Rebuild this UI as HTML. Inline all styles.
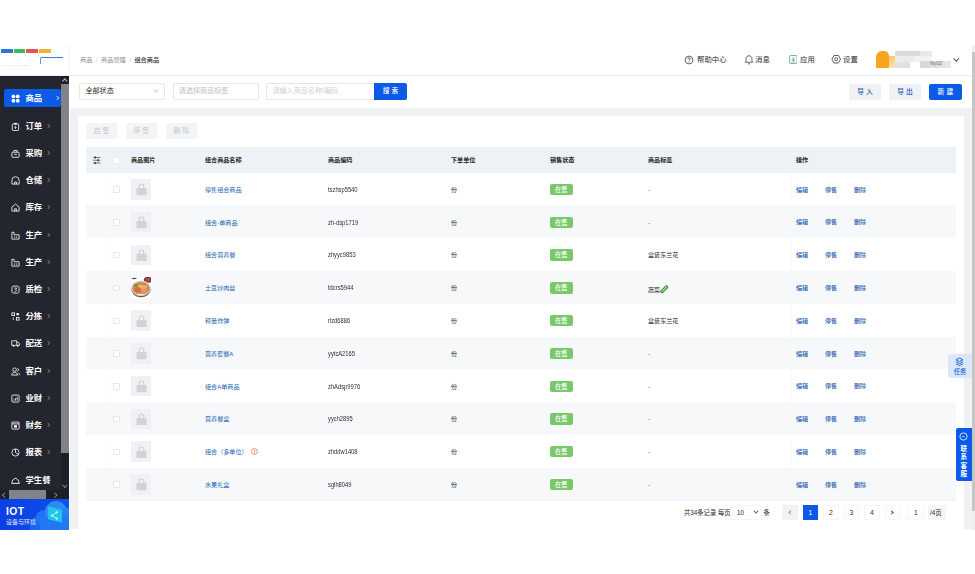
<!DOCTYPE html>
<html lang="zh-CN"><head><meta charset="utf-8"><title>组合商品</title>
<style>
*{box-sizing:border-box;margin:0;padding:0}
html,body{width:975px;height:574px;overflow:hidden;background:#fff}
body{position:relative;font-family:"Liberation Sans","Noto Sans CJK SC",sans-serif;color:#222;font-size:7px;line-height:1}
.a{position:absolute}
.t{position:absolute;white-space:nowrap;line-height:10px;height:10px}
#side{left:0;top:76px;width:69.4px;height:453.5px;background:#23262f}
.mi{position:absolute;left:0;width:61px;height:18px;color:#fff;font-size:8.4px;font-weight:700}
.mi svg{position:absolute;left:11px;top:4.5px;width:9px;height:9px}
.mi span{position:absolute;left:25.5px;top:0;line-height:18px;white-space:nowrap}
.mi i{position:absolute;left:45.5px;top:7px;width:4px;height:4px;border-right:1px solid #7d808a;border-top:1px solid #7d808a;transform:rotate(45deg) scale(.8)}
.mi.on{left:4px;width:57px;background:#0b5be8;border-radius:2px}
.mi.on svg{left:7px}.mi.on span{left:21.5px}.mi.on i{left:51px;border-color:#cfe0ff}
.sel{position:absolute;top:83.2px;height:16.4px;border:1px solid #e6e8ec;border-radius:2px;background:#fff;font-size:7.1px;line-height:14.4px;padding-left:5px;white-space:nowrap}
.btn{position:absolute;border-radius:2px;font-size:6.8px;text-align:center;white-space:nowrap;letter-spacing:2px;padding-left:2px;font-weight:500}
.row{position:absolute;left:86px;width:869.5px;height:32.78px}
.row.alt{background:#f7f8fa}
.row .t{top:12.3px;font-size:6.1px}
.cb{position:absolute;left:27px;top:13.8px;width:6.5px;height:6.5px;border:1px solid #e6e8ec;background:#fff;border-radius:1px}
.img{position:absolute;left:45px;top:6.5px;width:20px;height:20.5px;background:#f0f1f4}
.lk{color:#2265b3}
.row .cd{color:#2e3036;font-size:7px;transform:scaleX(.825);transform-origin:0 50%}
.row .ac{font-weight:500;color:#1f5fae;top:12px}
.tag{position:absolute;left:463.7px;top:11.3px;width:23px;height:11.3px;border-radius:2px;background:#79c96a;color:#fff;font-size:6.3px;font-weight:500;line-height:11.3px;text-align:center}
.pg{position:absolute;top:505px;width:15.5px;height:15px;border:1px solid #f5f6f8;font-size:6.8px;line-height:13px;text-align:center;color:#333;background:#fff}
</style></head><body>

<div class="a" style="left:0;top:44px;width:975px;height:32px;background:#fff;border-bottom:1px solid #ebedf0"></div>
<div class="a" style="left:69px;top:44px;width:1px;height:32px;background:#f3f4f6"></div>
<div class="a" style="left:1.2px;top:48.5px;width:11.8px;height:4px;background:#2878dc;border-radius:.5px"></div>
<div class="a" style="left:13.9px;top:48.5px;width:11.5px;height:4px;background:#3dbb5c;border-radius:.5px"></div>
<div class="a" style="left:26.3px;top:48.5px;width:11.7px;height:4px;background:#e4525a;border-radius:.5px"></div>
<div class="a" style="left:39px;top:48.5px;width:11.9px;height:4px;background:#f2b533;border-radius:.5px"></div>
<div class="a" style="left:40.2px;top:56.8px;width:23px;height:7px;border-top:1.5px solid #3287d6;border-left:1.2px solid #4a98e0;border-radius:1.5px 0 0 0"></div>
<div class="a" style="left:1px;top:65px;width:28px;height:1px;background:#f0f0f3"></div>
<div class="t" style="left:80px;top:54.8px;font-size:6.2px;color:#8a8d94">商品&nbsp; <span style="color:#c3c5ca">/</span>&nbsp; 商品管理&nbsp; <span style="color:#c3c5ca">/</span>&nbsp; <span style="color:#1d1f24;font-weight:500">组合商品</span></div>

<svg class="a" style="left:684px;top:54.5px" width="10" height="10" viewBox="0 0 10 10"><circle cx="5" cy="5" r="3.9" fill="none" stroke="#3c3e44" stroke-width=".8"/><path d="M3.7 4.1c0-1.7 2.6-1.7 2.6 0 0 1-1.3 1-1.3 1.8" fill="none" stroke="#3c3e44" stroke-width=".8"/><circle cx="5" cy="7.1" r=".5" fill="#3c3e44"/></svg>
<div class="t" style="left:697px;top:54.8px;font-size:7.4px;color:#2a2c31">帮助中心</div>
<svg class="a" style="left:744px;top:54px" width="10" height="11" viewBox="0 0 10 11"><path d="M1.2 8.2c1-1 .9-2.2.9-3.6 0-3.8 5.8-3.8 5.8 0 0 1.4-.1 2.6.9 3.6zM4 9.8h2" fill="none" stroke="#3c3e44" stroke-width=".8"/></svg>
<div class="t" style="left:755px;top:54.8px;font-size:7.4px;color:#2a2c31">消息</div>
<svg class="a" style="left:788.6px;top:55.2px" width="8.6" height="9" viewBox="0 0 8.6 9"><rect x=".5" y=".5" width="7.6" height="8" rx="1.2" fill="#f4fbf8" stroke="#56b795" stroke-width=".9"/><path d="M4.3 2.4v3.2M3 4.4l1.3 1.4 1.3-1.4" fill="none" stroke="#e0524f" stroke-width=".85"/><path d="M2.3 6.9h4" stroke="#56b795" stroke-width=".7"/></svg>
<div class="t" style="left:800px;top:54.8px;font-size:7.4px;color:#2a2c31">应用</div>
<svg class="a" style="left:831px;top:54.2px" width="10.5" height="10.5" viewBox="0 0 10 10"><path d="M.9 5L2.9 1.4h4.2L9.1 5 7.1 8.6H2.9z" fill="none" stroke="#3c3e44" stroke-width=".8" stroke-linejoin="round"/><circle cx="5" cy="5" r="1.5" fill="none" stroke="#3c3e44" stroke-width=".8"/></svg>
<div class="t" style="left:843px;top:54.8px;font-size:7.4px;color:#2a2c31">设置</div>
<div class="a" style="left:876.3px;top:51.3px;width:13px;height:16.3px;background:#f7a521;border-radius:6px 5px 1px 1px"></div>
<div class="a" style="left:889.3px;top:56.4px;width:6px;height:11.2px;background:linear-gradient(#f9c56b,#fde3b0)"></div>
<div class="a" style="left:895.2px;top:50.7px;width:25px;height:5.2px;background:#dadada;filter:blur(.5px)"></div>
<div class="a" style="left:920px;top:50.7px;width:11.5px;height:5.2px;background:#e9e9e9;filter:blur(.5px)"></div>
<div class="a" style="left:895.2px;top:55.8px;width:19.5px;height:6.2px;background:#ececec;filter:blur(.5px)"></div>
<div class="a" style="left:914.5px;top:55.8px;width:17px;height:6.2px;background:#f3f3f3;filter:blur(.5px)"></div>
<div class="a" style="left:895.2px;top:62px;width:15px;height:5.6px;background:#e1e1e1;filter:blur(.5px)"></div>
<div class="a" style="left:920px;top:61.4px;width:31px;height:6.2px;background:linear-gradient(90deg,#d6d6d6,#e9e9e9);filter:blur(.5px)"></div>
<div class="t" style="left:930px;top:58.3px;font-size:5.4px;color:#777">lily02</div>
<div class="a" style="left:954.3px;top:55.6px;width:4.6px;height:4.6px;border-right:1px solid #3c3e44;border-bottom:1px solid #3c3e44;transform:rotate(45deg) scale(.88)"></div>

<div class="a" id="side">
<div class="mi on" style="top:13px"><svg viewBox="0 0 10 10"><circle cx="2.7" cy="2.7" r="2.1" fill="#fff"/><circle cx="7.5" cy="2.7" r="2.1" fill="#fff"/><circle cx="2.7" cy="7.5" r="2.1" fill="#fff"/><circle cx="7.5" cy="7.5" r="2.1" fill="#fff"/></svg><span>商品</span><i></i></div>
<div class="mi" style="top:41px"><svg viewBox="0 0 10 10"><rect x="1.5" y="2" width="7" height="7.5" rx="1" fill="none" stroke="#fff" stroke-width=".9"/><path d="M3.5 1h3v1.8h-3z" fill="#fff"/><path d="M5 4.2v3M3.8 6l1.2 1.3L6.2 6" fill="none" stroke="#fff" stroke-width="0.8"/></svg><span>订单</span><i></i></div>
<div class="mi" style="top:68px"><svg viewBox="0 0 10 10"><rect x="1" y="3.6" width="8" height="5.6" rx=".8" fill="none" stroke="#fff" stroke-width=".9"/><path d="M3.2 3.4V1.6h3.6v1.8M3.5 6h3" fill="none" stroke="#fff" stroke-width="0.9"/></svg><span>采购</span><i></i></div>
<div class="mi" style="top:95px"><svg viewBox="0 0 10 10"><path d="M1 9V4.8A4 4 0 0 1 9 4.8V9z" fill="none" stroke="#fff" stroke-width="0.9"/><path d="M4 9V6.6h2V9" fill="none" stroke="#fff" stroke-width="0.9"/></svg><span>仓储</span><i></i></div>
<div class="mi" style="top:122px"><svg viewBox="0 0 10 10"><path d="M1 9V4.4L5 1.2l4 3.2V9z" fill="none" stroke="#fff" stroke-width="0.9"/><path d="M4 9V6.4h2V9" fill="none" stroke="#fff" stroke-width="0.9"/></svg><span>库存</span><i></i></div>
<div class="mi" style="top:150px"><svg viewBox="0 0 10 10"><path d="M1 9V1.4h2.4v2.8H9V9z" fill="none" stroke="#fff" stroke-width="0.9"/><path d="M4 6v1.6M6.3 6v1.6" fill="none" stroke="#fff" stroke-width="0.9"/></svg><span>生产</span><i></i></div>
<div class="mi" style="top:177px"><svg viewBox="0 0 10 10"><path d="M1 9V1.4h2.4v2.8H9V9z" fill="none" stroke="#fff" stroke-width="0.9"/><path d="M4 6v1.6M6.3 6v1.6" fill="none" stroke="#fff" stroke-width="0.9"/></svg><span>生产</span><i></i></div>
<div class="mi" style="top:204px"><svg viewBox="0 0 10 10"><rect x="1" y="1.2" width="8" height="7.8" rx="2" fill="none" stroke="#fff" stroke-width=".9"/><path d="M3.6 3.4h2.8L5 5c1.6 0 1.8 2-.2 2H3.8" fill="none" stroke="#fff" stroke-width="0.8"/></svg><span>质检</span><i></i></div>
<div class="mi" style="top:231px"><svg viewBox="0 0 10 10"><rect x="1" y="1" width="3" height="3" fill="none" stroke="#fff" stroke-width=".9"/><rect x="6" y="6" width="3" height="3" fill="none" stroke="#fff" stroke-width=".9"/><path d="M6 2.5h3M2.5 6v3" fill="none" stroke="#fff" stroke-width="0.9"/><rect x="6.2" y="1.2" width="2.4" height="2.4" fill="#fff"/></svg><span>分拣</span><i></i></div>
<div class="mi" style="top:258px"><svg viewBox="0 0 10 10"><path d="M.8 2h5.6v5H.8zM6.4 3.6h1.8L9.4 5.2V7H6.4" fill="none" stroke="#fff" stroke-width="0.9"/><circle cx="2.8" cy="7.6" r="1" fill="#fff"/><circle cx="7.4" cy="7.6" r="1" fill="#fff"/></svg><span>配送</span><i></i></div>
<div class="mi" style="top:286px"><svg viewBox="0 0 10 10"><circle cx="4" cy="3" r="2" fill="none" stroke="#fff" stroke-width=".9"/><path d="M.8 9c0-4 6.4-4 6.4 0zM7 1.4c1.8.4 1.8 3 0 3.4M8.2 6.4c.8.4 1.2 1.4 1.2 2.6" fill="none" stroke="#fff" stroke-width="0.9"/></svg><span>客户</span><i></i></div>
<div class="mi" style="top:313px"><svg viewBox="0 0 10 10"><rect x="1" y="1.2" width="8" height="7.8" rx="1" fill="none" stroke="#fff" stroke-width=".9"/><path d="M3.2 7.4V6M5 7.4V4.6M6.8 7.4V3.2" fill="none" stroke="#fff" stroke-width="0.9"/></svg><span>业财</span><i></i></div>
<div class="mi" style="top:340px"><svg viewBox="0 0 10 10"><rect x="1" y="1.2" width="8" height="7.8" rx=".6" fill="none" stroke="#fff" stroke-width=".9"/><path d="M1 3.2h8" fill="none" stroke="#fff" stroke-width="0.9"/><rect x="3.4" y="4.6" width="3.2" height="2.8" fill="#fff"/></svg><span>财务</span><i></i></div>
<div class="mi" style="top:367px"><svg viewBox="0 0 10 10"><circle cx="5" cy="5" r="4" fill="none" stroke="#fff" stroke-width=".9"/><path d="M5 1.2V5l3 2" fill="none" stroke="#fff" stroke-width="0.9"/></svg><span>报表</span><i></i></div>
<div class="mi" style="top:395px"><svg viewBox="0 0 10 10"><path d="M.8 8.2C1.2 5.5 2.6 2.6 5 2.6S8.8 5.5 9.2 8.2z" fill="none" stroke="#fff" stroke-width="1"/></svg><span>学生餐</span></div>
<div class="a" style="left:61.2px;top:0;width:8.2px;height:414px;background:#1e2028"></div>
<div class="a" style="left:61.2px;top:8px;width:8.2px;height:368.5px;background:#828389"></div>
<div class="a" style="left:63.3px;top:3.3px;width:3.6px;height:3.6px;border-left:1px solid #b5b5b8;border-top:1px solid #b5b5b8;transform:rotate(45deg)"></div>
<div class="a" style="left:63.3px;top:406.5px;width:3.6px;height:3.6px;border-right:1px solid #85868c;border-bottom:1px solid #85868c;transform:rotate(45deg)"></div>
<div class="a" style="left:0;top:414px;width:69.4px;height:8.7px;background:#1d1f27"></div>
<div class="a" style="left:9px;top:414px;width:36.5px;height:8.7px;background:#828389"></div>
<div class="a" style="left:3px;top:416.5px;width:3.5px;height:3.5px;border-left:1px solid #7a7c84;border-bottom:1px solid #7a7c84;transform:rotate(45deg)"></div>
<div class="a" style="left:53px;top:416.5px;width:3.5px;height:3.5px;border-right:1px solid #7a7c84;border-top:1px solid #7a7c84;transform:rotate(45deg)"></div>
<div class="a" style="left:0;top:422.6px;width:69.4px;height:31px;background:linear-gradient(90deg,#0b3fe2,#0b52ec);overflow:hidden">
 <div class="a" style="left:30px;top:17px;width:44px;height:20px;background:#1a66ee;border-radius:9px 9px 0 0"></div>
 <div class="a" style="left:36px;top:11px;width:16px;height:16px;background:#1f72f1;border-radius:8px"></div>
 <div class="a" style="left:45px;top:2.5px;width:22px;height:22px;background:#2f8af6;border-radius:11px"></div>
 <div class="a" style="left:58px;top:9px;width:16px;height:16px;background:#2a80f4;border-radius:8px"></div>
 <div class="a" style="left:40px;top:18px;width:34px;height:14px;background:#2277f2"></div>
 <div class="a" style="left:47.5px;top:9.5px;width:13.5px;height:13px;background:#1fc6f0;transform:skewY(14deg)"></div>
 <svg class="a" style="left:49px;top:11px" width="11" height="11" viewBox="0 0 11 11"><path d="M7.5 2.5L3 5.5l4.5 3" stroke="#bff" stroke-width=".9" fill="none"/><circle cx="7.7" cy="2.4" r="1.1" fill="#dff"/><circle cx="3" cy="5.5" r="1.1" fill="#dff"/><circle cx="7.7" cy="8.6" r="1.1" fill="#dff"/></svg>
 <div class="t" style="left:6px;top:7.3px;font-size:10.3px;font-weight:700;color:#fff;letter-spacing:.4px;height:12px;line-height:12px">IOT</div>
 <div class="t" style="left:6px;top:19.3px;font-size:6px;color:#e4ecff;height:8px;line-height:8px">设备与环境</div>
</div>
</div>
<div class="a" style="left:69.5px;top:107.7px;width:905.5px;height:421.8px;background:#f0f1f3"></div>
<div class="a" style="left:78.3px;top:115.5px;width:886.2px;height:414px;background:#fff"></div>
<div class="sel" style="left:79.4px;width:85.6px;color:#1d1f24">全部状态<span class="a" style="left:73.5px;top:3.8px;width:4.2px;height:4.2px;border-right:1px solid #c4c7cd;border-bottom:1px solid #c4c7cd;transform:rotate(45deg) scale(.85)"></span></div>
<div class="sel" style="left:172.8px;width:85.8px;color:#bcbec4">请选择商品标签</div>
<div class="sel" style="left:266.4px;width:109px;color:#cfd1d6;border-radius:2px 0 0 2px">请输入商品名称/编码</div>
<div class="btn" style="left:374.2px;top:83.2px;width:32.7px;height:16.4px;line-height:16.4px;background:#0b5be8;color:#fff;border-radius:0 2px 2px 0">搜索</div>
<div class="btn" style="left:849px;top:83.5px;width:32px;height:16px;line-height:16px;background:#eff1f5;color:#1f62b4">导入</div>
<div class="btn" style="left:889px;top:83.5px;width:32px;height:16px;line-height:16px;background:#eff1f5;color:#1f62b4">导出</div>
<div class="btn" style="left:929px;top:83.5px;width:32.8px;height:16px;line-height:16px;background:#0b5be8;color:#fff">新建</div>
<div class="btn" style="left:86px;top:123.4px;width:31.2px;height:15.8px;line-height:15.8px;font-size:7px;background:#f3f4f6;color:#c6c8cd;font-weight:400">启售</div>
<div class="btn" style="left:125.8px;top:123.4px;width:30.9px;height:15.8px;line-height:15.8px;font-size:7px;background:#f3f4f6;color:#c6c8cd;font-weight:400">停售</div>
<div class="btn" style="left:165.6px;top:123.4px;width:31.2px;height:15.8px;line-height:15.8px;font-size:7px;background:#f3f4f6;color:#c6c8cd;font-weight:400">删除</div>

<div class="a" style="left:86px;top:147.4px;width:869.5px;height:25.2px;background:#eef1f6"></div>
<svg class="a" style="left:93.4px;top:156px" width="7.4" height="8.5" viewBox="0 0 8 8.5" preserveAspectRatio="none"><path d="M0 1.5h8M0 4.25h8M0 7h8" stroke="#33363c" stroke-width=".7"/><rect x="1.8" y=".4" width="1.3" height="2.2" fill="#33363c"/><rect x="4.9" y="3.15" width="1.3" height="2.2" fill="#33363c"/><rect x="1.8" y="5.9" width="1.3" height="2.2" fill="#33363c"/></svg>
<div class="a" style="left:113px;top:157.2px;width:6.5px;height:6.5px;background:#fff;border:1px solid #eceef2;border-radius:1px"></div>

<div class="t" style="left:131px;top:154.9px;font-size:6.1px;font-weight:700;color:#1d1f24">商品图片</div>
<div class="t" style="left:205px;top:154.9px;font-size:6.1px;font-weight:700;color:#1d1f24">组合商品名称</div>
<div class="t" style="left:328px;top:154.9px;font-size:6.1px;font-weight:700;color:#1d1f24">商品编码</div>
<div class="t" style="left:451px;top:154.9px;font-size:6.1px;font-weight:700;color:#1d1f24">下单单位</div>
<div class="t" style="left:550px;top:154.9px;font-size:6.1px;font-weight:700;color:#1d1f24">销售状态</div>
<div class="t" style="left:648px;top:154.9px;font-size:6.1px;font-weight:700;color:#1d1f24">商品标签</div>
<div class="t" style="left:796px;top:154.9px;font-size:6.1px;font-weight:700;color:#1d1f24">操作</div>
<div class="row" style="top:172.6px"><div class="cb"></div><div class="img"><svg class="a" style="left:4.5px;top:4.3px" width="11" height="12.5" viewBox="0 0 11 12.5"><rect x=".5" y="5" width="10" height="7.2" rx=".5" fill="#d1d3d7"/><path d="M3.2 5.4V3.3a2.3 2.3 0 0 1 4.6 0v2.1" fill="none" stroke="#d1d3d7" stroke-width="1.2"/></svg></div>
<div class="t lk" style="left:119px">停售组合商品</div>
<div class="t cd" style="left:242px">tszhsp5540</div>
<div class="t" style="left:365px;color:#33363c">份</div>
<div class="tag">在售</div>
<div class="t" style="left:562px;color:#33363c">-</div>
<div class="t lk ac" style="left:710px">编辑</div>
<div class="t lk ac" style="left:739px">停售</div>
<div class="t lk ac" style="left:768px">删除</div>
</div>
<div class="row alt" style="top:205.38px"><div class="cb"></div><div class="img"><svg class="a" style="left:4.5px;top:4.3px" width="11" height="12.5" viewBox="0 0 11 12.5"><rect x=".5" y="5" width="10" height="7.2" rx=".5" fill="#d1d3d7"/><path d="M3.2 5.4V3.3a2.3 2.3 0 0 1 4.6 0v2.1" fill="none" stroke="#d1d3d7" stroke-width="1.2"/></svg></div>
<div class="t lk" style="left:119px">组合-单商品</div>
<div class="t cd" style="left:242px">zh-dsp1719</div>
<div class="t" style="left:365px;color:#33363c">份</div>
<div class="tag">在售</div>
<div class="t" style="left:562px;color:#33363c">-</div>
<div class="t lk ac" style="left:710px">编辑</div>
<div class="t lk ac" style="left:739px">停售</div>
<div class="t lk ac" style="left:768px">删除</div>
</div>
<div class="row" style="top:238.16px"><div class="cb"></div><div class="img"><svg class="a" style="left:4.5px;top:4.3px" width="11" height="12.5" viewBox="0 0 11 12.5"><rect x=".5" y="5" width="10" height="7.2" rx=".5" fill="#d1d3d7"/><path d="M3.2 5.4V3.3a2.3 2.3 0 0 1 4.6 0v2.1" fill="none" stroke="#d1d3d7" stroke-width="1.2"/></svg></div>
<div class="t lk" style="left:119px">组合营养餐</div>
<div class="t cd" style="left:242px">zhyyc9853</div>
<div class="t" style="left:365px;color:#33363c">份</div>
<div class="tag">在售</div>
<div class="t" style="left:562px;color:#2a2c31">盒装东兰花</div>
<div class="t lk ac" style="left:710px">编辑</div>
<div class="t lk ac" style="left:739px">停售</div>
<div class="t lk ac" style="left:768px">删除</div>
</div>
<div class="row alt" style="top:270.94px"><div class="cb"></div><div class="img" style="background:#fff"><svg class="a" style="left:0;top:0" width="20" height="20.5" viewBox="0 0 20 20"><rect width="20" height="20" fill="#fff"/><ellipse cx="16.8" cy="2.6" rx="4" ry="3" fill="#7b3345"/><ellipse cx="17" cy="2.4" rx="2.6" ry="1.8" fill="#b5503e"/><ellipse cx="3.2" cy="1.2" rx="2.6" ry=".7" fill="#5d5044"/><ellipse cx="10" cy="12" rx="9.7" ry="8" fill="#7a5a36"/><ellipse cx="10" cy="11" rx="9.7" ry="7.7" fill="#cfd9e6"/><ellipse cx="10" cy="11.2" rx="8.6" ry="6.6" fill="#d98a50"/><ellipse cx="7" cy="12.5" rx="3.6" ry="2.8" fill="#cf6f46"/><ellipse cx="12.5" cy="9.5" rx="3.4" ry="2.6" fill="#eaa968"/><ellipse cx="13" cy="13.5" rx="3" ry="2.2" fill="#e39a5c"/><ellipse cx="5" cy="8" rx="2.4" ry="1.5" fill="#7d9440"/><ellipse cx="13.5" cy="6.8" rx="1.6" ry="1" fill="#8a9a48"/><ellipse cx="9" cy="9" rx="1.6" ry="1.2" fill="#f0be7c"/><ellipse cx="9.5" cy="17.3" rx="4.5" ry=".8" fill="#f1e6d8"/></svg></div>
<div class="t lk" style="left:119px">土豆炒肉丝</div>
<div class="t cd" style="left:242px">tdcrs5944</div>
<div class="t" style="left:365px;color:#33363c">份</div>
<div class="tag">在售</div>
<div class="t" style="left:562px;color:#2a2c31">蔬菜<svg style="position:relative;top:2px;margin-left:.3px" width="8.5" height="8.5" viewBox="0 0 8.5 8.5"><path d="M2 6.5L6.5 2" stroke="#2f7f33" stroke-width="3.4" stroke-linecap="round"/><path d="M2 6.5L6.5 2" stroke="#7fc65a" stroke-width="2" stroke-linecap="round"/><path d="M2.4 5.6L5.7 2.3" stroke="#c5eba0" stroke-width=".6" stroke-linecap="round"/></svg></div>
<div class="t lk ac" style="left:710px">编辑</div>
<div class="t lk ac" style="left:739px">停售</div>
<div class="t lk ac" style="left:768px">删除</div>
</div>
<div class="row" style="top:303.72px"><div class="cb"></div><div class="img"><svg class="a" style="left:4.5px;top:4.3px" width="11" height="12.5" viewBox="0 0 11 12.5"><rect x=".5" y="5" width="10" height="7.2" rx=".5" fill="#d1d3d7"/><path d="M3.2 5.4V3.3a2.3 2.3 0 0 1 4.6 0v2.1" fill="none" stroke="#d1d3d7" stroke-width="1.2"/></svg></div>
<div class="t lk" style="left:119px">称量炸弹</div>
<div class="t cd" style="left:242px">rlzd6886</div>
<div class="t" style="left:365px;color:#33363c">份</div>
<div class="tag">在售</div>
<div class="t" style="left:562px;color:#2a2c31">盒装东兰花</div>
<div class="t lk ac" style="left:710px">编辑</div>
<div class="t lk ac" style="left:739px">停售</div>
<div class="t lk ac" style="left:768px">删除</div>
</div>
<div class="row alt" style="top:336.5px"><div class="cb"></div><div class="img"><svg class="a" style="left:4.5px;top:4.3px" width="11" height="12.5" viewBox="0 0 11 12.5"><rect x=".5" y="5" width="10" height="7.2" rx=".5" fill="#d1d3d7"/><path d="M3.2 5.4V3.3a2.3 2.3 0 0 1 4.6 0v2.1" fill="none" stroke="#d1d3d7" stroke-width="1.2"/></svg></div>
<div class="t lk" style="left:119px">营养套餐A</div>
<div class="t cd" style="left:242px">yytcA2165</div>
<div class="t" style="left:365px;color:#33363c">份</div>
<div class="tag">在售</div>
<div class="t" style="left:562px;color:#33363c">-</div>
<div class="t lk ac" style="left:710px">编辑</div>
<div class="t lk ac" style="left:739px">停售</div>
<div class="t lk ac" style="left:768px">删除</div>
</div>
<div class="row" style="top:369.28px"><div class="cb"></div><div class="img"><svg class="a" style="left:4.5px;top:4.3px" width="11" height="12.5" viewBox="0 0 11 12.5"><rect x=".5" y="5" width="10" height="7.2" rx=".5" fill="#d1d3d7"/><path d="M3.2 5.4V3.3a2.3 2.3 0 0 1 4.6 0v2.1" fill="none" stroke="#d1d3d7" stroke-width="1.2"/></svg></div>
<div class="t lk" style="left:119px">组合A单商品</div>
<div class="t cd" style="left:242px">zhAdsp9976</div>
<div class="t" style="left:365px;color:#33363c">份</div>
<div class="tag">在售</div>
<div class="t" style="left:562px;color:#33363c">-</div>
<div class="t lk ac" style="left:710px">编辑</div>
<div class="t lk ac" style="left:739px">停售</div>
<div class="t lk ac" style="left:768px">删除</div>
</div>
<div class="row alt" style="top:402.06px"><div class="cb"></div><div class="img"><svg class="a" style="left:4.5px;top:4.3px" width="11" height="12.5" viewBox="0 0 11 12.5"><rect x=".5" y="5" width="10" height="7.2" rx=".5" fill="#d1d3d7"/><path d="M3.2 5.4V3.3a2.3 2.3 0 0 1 4.6 0v2.1" fill="none" stroke="#d1d3d7" stroke-width="1.2"/></svg></div>
<div class="t lk" style="left:119px">营养餐盒</div>
<div class="t cd" style="left:242px">yych2895</div>
<div class="t" style="left:365px;color:#33363c">份</div>
<div class="tag">在售</div>
<div class="t" style="left:562px;color:#33363c">-</div>
<div class="t lk ac" style="left:710px">编辑</div>
<div class="t lk ac" style="left:739px">停售</div>
<div class="t lk ac" style="left:768px">删除</div>
</div>
<div class="row" style="top:434.84px"><div class="cb"></div><div class="img"><svg class="a" style="left:4.5px;top:4.3px" width="11" height="12.5" viewBox="0 0 11 12.5"><rect x=".5" y="5" width="10" height="7.2" rx=".5" fill="#d1d3d7"/><path d="M3.2 5.4V3.3a2.3 2.3 0 0 1 4.6 0v2.1" fill="none" stroke="#d1d3d7" stroke-width="1.2"/></svg></div>
<div class="t lk" style="left:119px">组合（多单位） <svg style="position:relative;top:1.2px;margin-left:1.2px" width="7" height="7" viewBox="0 0 7 7"><circle cx="3.5" cy="3.5" r="2.9" fill="none" stroke="#e4602b" stroke-width=".7"/><path d="M3.5 1.8v2.2" stroke="#e4602b" stroke-width=".7"/><circle cx="3.5" cy="5" r=".4" fill="#e4602b"/></svg></div>
<div class="t cd" style="left:242px">zhddw1408</div>
<div class="t" style="left:365px;color:#33363c">份</div>
<div class="tag">在售</div>
<div class="t" style="left:562px;color:#33363c">-</div>
<div class="t lk ac" style="left:710px">编辑</div>
<div class="t lk ac" style="left:739px">停售</div>
<div class="t lk ac" style="left:768px">删除</div>
</div>
<div class="row alt" style="top:467.62px"><div class="cb"></div><div class="img"><svg class="a" style="left:4.5px;top:4.3px" width="11" height="12.5" viewBox="0 0 11 12.5"><rect x=".5" y="5" width="10" height="7.2" rx=".5" fill="#d1d3d7"/><path d="M3.2 5.4V3.3a2.3 2.3 0 0 1 4.6 0v2.1" fill="none" stroke="#d1d3d7" stroke-width="1.2"/></svg></div>
<div class="t lk" style="left:119px">水果礼盒</div>
<div class="t cd" style="left:242px">sglh8049</div>
<div class="t" style="left:365px;color:#33363c">份</div>
<div class="tag">在售</div>
<div class="t" style="left:562px;color:#33363c">-</div>
<div class="t lk ac" style="left:710px">编辑</div>
<div class="t lk ac" style="left:739px">停售</div>
<div class="t lk ac" style="left:768px">删除</div>
</div>
<div class="a" style="left:106px;top:172.6px;width:1px;height:328px;background:#f8f9fa"></div>
<div class="a" style="left:791px;top:172.6px;width:1px;height:328px;background:#f8f9fa"></div>
<div class="a" style="left:86px;top:500.4px;width:869.5px;height:1px;background:#f0f1f4"></div>

<div class="t" style="left:684px;top:508px;font-size:6.3px;color:#2a2c31">共34条记录 每页</div>
<div class="a" style="left:732px;top:505.3px;width:29.5px;height:15px;border:1px solid #f4f5f7;background:#fff"></div>
<div class="t" style="left:737px;top:508px;font-size:6.3px;color:#2a2c31">10</div>
<div class="a" style="left:753.5px;top:509.3px;width:4px;height:4px;border-right:1px solid #555;border-bottom:1px solid #555;transform:rotate(45deg) scale(.9)"></div>
<div class="t" style="left:763.5px;top:508px;font-size:6.3px;color:#2a2c31">条</div>
<div class="pg" style="left:782.2px;background:#f1f2f4;border-color:#f1f2f4"><span class="a" style="left:6.3px;top:5px;width:3.2px;height:3.2px;border-left:.8px solid #9a9ca3;border-bottom:.8px solid #9a9ca3;transform:rotate(45deg)"></span></div>
<div class="pg" style="left:802.7px;background:#0b5be8;border-color:#0b5be8;color:#fff">1</div>
<div class="pg" style="left:823.2px">2</div>
<div class="pg" style="left:843.7px">3</div>
<div class="pg" style="left:864.2px">4</div>
<div class="pg" style="left:884.7px"><span class="a" style="left:4.3px;top:5px;width:3.2px;height:3.2px;border-right:.8px solid #55585e;border-top:.8px solid #55585e;transform:rotate(45deg)"></span></div>
<div class="pg" style="left:907.3px;width:17px">1</div>
<div class="a" style="left:927.5px;top:505.2px;width:18.3px;height:15px;background:#f5f6f8"></div>
<div class="t" style="left:930px;top:508px;font-size:6.3px;color:#2a2c31">/4页</div>

<div class="a" style="left:972.2px;top:44.5px;width:2.8px;height:485px;background:#efefef"></div>
<div class="a" style="left:972.4px;top:51.8px;width:2.6px;height:459px;background:#c6c6c8"></div>
<div class="a" style="left:948px;top:354.4px;width:24px;height:23.6px;background:#dbe6f9;border-radius:3px 0 0 3px"></div>
<svg class="a" style="left:955px;top:356.5px" width="9" height="10" viewBox="0 0 9 10"><path d="M4.5 1L8 2.8 4.5 4.6 1 2.8zM1 4.8l3.5 1.8L8 4.8M1 6.8l3.5 1.8L8 6.8" fill="none" stroke="#1a5fd0" stroke-width=".95" stroke-linejoin="round"/></svg>
<div class="t" style="left:953.8px;top:367.2px;font-size:6.3px;font-weight:500;color:#1a5fd0">任务</div>
<div class="a" style="left:956px;top:427.7px;width:16px;height:53.6px;background:#0b5be8;border-radius:2px 0 0 2px"></div>
<svg class="a" style="left:959.2px;top:432.4px" width="9" height="9" viewBox="0 0 9 9"><circle cx="4.5" cy="4.5" r="3.6" fill="none" stroke="#fff" stroke-width=".8"/><path d="M3 4.5h3" stroke="#fff" stroke-width=".8" stroke-dasharray=".8 .4"/></svg>
<div class="a" style="left:960.2px;top:445px;width:7px;font-size:6.6px;line-height:8.4px;color:#fff;font-weight:700;text-align:center">联系客服</div>

</body></html>
